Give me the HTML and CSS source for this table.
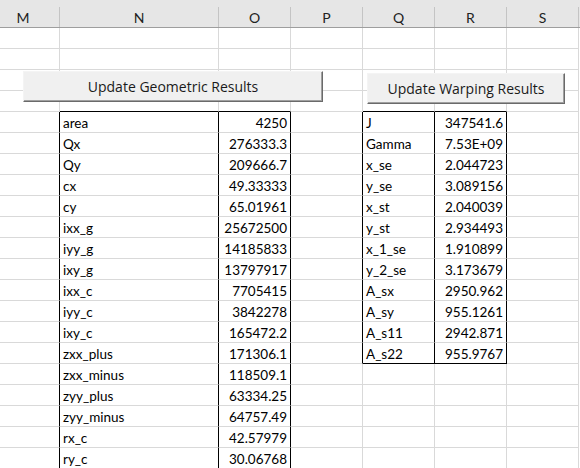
FILE: index.html
```html
<!DOCTYPE html>
<html>
<head>
<meta charset="utf-8">
<link rel="stylesheet" href="styles.css">
</head>
<body>
<div class="sheet">
  <div class="colhead">
    <div class="hc hc-m">M</div>
    <div class="hc">N</div>
    <div class="hc">O</div>
    <div class="hc">P</div>
    <div class="hc">Q</div>
    <div class="hc">R</div>
    <div class="hc">S</div>
  </div>
  <div class="grid">
    <!-- rows 1-3 -->
    <div class="c"></div><div class="c"></div><div class="c"></div><div class="c"></div><div class="c"></div><div class="c"></div><div class="c"></div>
    <div class="c"></div><div class="c"></div><div class="c"></div><div class="c"></div><div class="c"></div><div class="c"></div><div class="c"></div>
    <div class="c"></div><div class="c"></div><div class="c"></div><div class="c"></div><div class="c"></div><div class="c"></div><div class="c"></div>
    <!-- row 4: table tops -->
    <div class="c"></div><div class="c bb"></div><div class="c bb"></div><div class="c"></div><div class="c bb"></div><div class="c bb"></div><div class="c"></div>

    <div class="c br"></div><div class="c br lbl">area</div><div class="c br num">4250</div><div class="c br"></div><div class="c br lbl">J</div><div class="c br num">347541.6</div><div class="c"></div>
    <div class="c br"></div><div class="c br lbl">Qx</div><div class="c br num">276333.3</div><div class="c br"></div><div class="c br lbl">Gamma</div><div class="c br num">7.53E+09</div><div class="c"></div>
    <div class="c br"></div><div class="c br lbl">Qy</div><div class="c br num">209666.7</div><div class="c br"></div><div class="c br lbl">x_se</div><div class="c br num">2.044723</div><div class="c"></div>
    <div class="c br"></div><div class="c br lbl">cx</div><div class="c br num">49.33333</div><div class="c br"></div><div class="c br lbl">y_se</div><div class="c br num">3.089156</div><div class="c"></div>
    <div class="c br"></div><div class="c br lbl">cy</div><div class="c br num">65.01961</div><div class="c br"></div><div class="c br lbl">x_st</div><div class="c br num">2.040039</div><div class="c"></div>
    <div class="c br"></div><div class="c br lbl">ixx_g</div><div class="c br num">25672500</div><div class="c br"></div><div class="c br lbl">y_st</div><div class="c br num">2.934493</div><div class="c"></div>
    <div class="c br"></div><div class="c br lbl">iyy_g</div><div class="c br num">14185833</div><div class="c br"></div><div class="c br lbl">x_1_se</div><div class="c br num">1.910899</div><div class="c"></div>
    <div class="c br"></div><div class="c br lbl">ixy_g</div><div class="c br num">13797917</div><div class="c br"></div><div class="c br lbl">y_2_se</div><div class="c br num">3.173679</div><div class="c"></div>
    <div class="c br"></div><div class="c br lbl">ixx_c</div><div class="c br num">7705415</div><div class="c br"></div><div class="c br lbl">A_sx</div><div class="c br num">2950.962</div><div class="c"></div>
    <div class="c br"></div><div class="c br lbl">iyy_c</div><div class="c br num">3842278</div><div class="c br"></div><div class="c br lbl">A_sy</div><div class="c br num">955.1261</div><div class="c"></div>
    <div class="c br"></div><div class="c br lbl">ixy_c</div><div class="c br num">165472.2</div><div class="c br"></div><div class="c br lbl">A_s11</div><div class="c br num">2942.871</div><div class="c"></div>
    <div class="c br"></div><div class="c br lbl">zxx_plus</div><div class="c br num">171306.1</div><div class="c br"></div><div class="c br bb lbl">A_s22</div><div class="c br bb num">955.9767</div><div class="c"></div>
    <div class="c br"></div><div class="c br lbl">zxx_minus</div><div class="c br num">118509.1</div><div class="c"></div><div class="c"></div><div class="c"></div><div class="c"></div>
    <div class="c br"></div><div class="c br lbl">zyy_plus</div><div class="c br num">63334.25</div><div class="c"></div><div class="c"></div><div class="c"></div><div class="c"></div>
    <div class="c br"></div><div class="c br lbl">zyy_minus</div><div class="c br num">64757.49</div><div class="c"></div><div class="c"></div><div class="c"></div><div class="c"></div>
    <div class="c br"></div><div class="c br lbl">rx_c</div><div class="c br num">42.57979</div><div class="c"></div><div class="c"></div><div class="c"></div><div class="c"></div>
    <div class="c br"></div><div class="c br lbl">ry_c</div><div class="c br num">30.06768</div><div class="c"></div><div class="c"></div><div class="c"></div><div class="c"></div>
  </div>
  <button class="btn btn-geo">Update Geometric Results</button>
  <button class="btn btn-warp">Update Warping Results</button>
</div>
</body>
</html>
```

FILE: styles.css
```css
html, body {
  margin: 0;
  padding: 0;
  background: #ffffff;
  overflow: hidden;
}
.sheet {
  position: relative;
  width: 580px;
  height: 468px;
  overflow: hidden;
  font-family: "Lato", "Open Sans", sans-serif;
  font-size: 13.5px;
  color: #000;
}
.colhead {
  display: grid;
  grid-template-columns: 60px 159px 72px 72px 72px 72px 72px 1fr;
  padding-top: 7px;
  background: #e6e6e6;
  border-bottom: 1px solid #9e9e9e;
}
.hc {
  height: 20px;
  line-height: 21px;
  text-align: center;
  border-right: 1px solid #c4c4c4;
  color: #222;
  font-size: 14px;
}
.hc-m {
  padding-right: 13px;
}
.grid {
  display: grid;
  grid-template-columns: 60px 159px 72px 72px 72px 72px 72px;
  grid-auto-rows: 21px;
}
.c {
  box-sizing: border-box;
  border-right: 1px solid #d9d9d9;
  border-bottom: 1px solid #d9d9d9;
  line-height: 20px;
  padding-top: 1px;
  white-space: nowrap;
  overflow: hidden;
}
.c.br {
  border-right-color: #000;
}
.c.bb {
  border-bottom-color: #000;
}
.lbl {
  padding-left: 3px;
}
.num {
  text-align: right;
  padding-right: 3px;
}
.btn {
  position: absolute;
  box-sizing: border-box;
  margin: 0;
  padding: 0;
  background: #f0f0f0;
  border: 1px solid;
  border-color: #f4f4f4 #6a6a6a #6a6a6a #f4f4f4;
  box-shadow: inset -1px -1px 0 #a0a0a0;
  font-family: "Open Sans", "Noto Sans", sans-serif;
  font-size: 14px;
  color: #1a1a1a;
  text-align: center;
}
.btn-geo {
  left: 23px;
  top: 71px;
  width: 300px;
  height: 31px;
}
.btn-warp {
  left: 367px;
  top: 73px;
  width: 198px;
  height: 31px;
}
```
